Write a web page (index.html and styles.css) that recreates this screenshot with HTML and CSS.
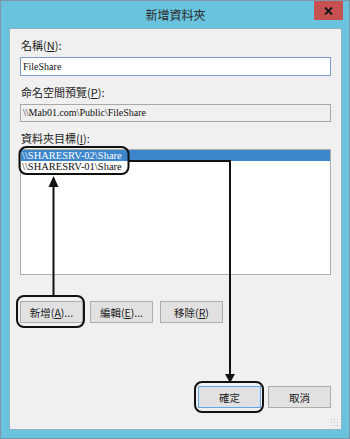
FILE: index.html
```html
<!DOCTYPE html>
<html lang="zh-Hant">
<head>
    <meta charset="UTF-8">
    <title>新增資料夾</title>
    <link rel="stylesheet" href="styles.css">
</head>
<body>
    <div class="window">
        <div class="titlebar">
            <span class="title">新增資料夾</span>
            <span class="close">
                <svg width="9" height="8" viewBox="0 0 9 8">
                    <path d="M1 0.5 L8 7.5 M8 0.5 L1 7.5" stroke="#1a1a1a" stroke-width="2"/>
                </svg>
            </span>
        </div>
        <div class="content">
            <label class="label">名稱(<u>N</u>):</label>
            <div class="textbox">FileShare</div>

            <label class="label">命名空間預覽(<u>P</u>):</label>
            <div class="textbox disabled">\\Mab01.com\Public\FileShare</div>

            <label class="label">資料夾目標(<u>I</u>):</label>
            <div class="listbox">
                <div class="item selected">\\SHARESRV-02\Share</div>
                <div class="item">\\SHARESRV-01\Share</div>
            </div>

            <div class="button-row">
                <button class="btn">新增(<u>A</u>)...</button>
                <button class="btn">編輯(<u>E</u>)...</button>
                <button class="btn">移除(<u>R</u>)</button>
            </div>

            <div class="dialog-buttons">
                <button class="btn default">確定</button>
                <button class="btn">取消</button>
            </div>
            <span class="grip"></span>
        </div>

        <!-- annotations drawn over the dialog -->
        <svg class="marks" width="350" height="439" viewBox="0 0 350 439">
            <rect x="19.5" y="147" width="109" height="27" rx="7" fill="none" stroke="#111" stroke-width="2"/>
            <path d="M128.5 161 H230 V376" fill="none" stroke="#111" stroke-width="2"/>
            <path d="M225 374 L235 374 L230 383 Z" fill="#111"/>
            <path d="M53.5 296 V184" fill="none" stroke="#111" stroke-width="2"/>
            <path d="M48.5 187 L58.5 187 L53.5 176 Z" fill="#111"/>
            <rect x="17" y="296" width="67" height="31" rx="7" fill="none" stroke="#111" stroke-width="2"/>
            <rect x="195" y="382" width="68" height="30" rx="7" fill="none" stroke="#111" stroke-width="2"/>
        </svg>
    </div>
</body>
</html>
```

FILE: styles.css
```css
* {
    margin: 0;
    padding: 0;
    box-sizing: border-box;
}

body {
    width: 350px;
    height: 439px;
    font-family: "Noto Sans CJK TC", "Liberation Sans", sans-serif;
    color: #1e1e1e;
    overflow: hidden;
}

.window {
    position: relative;
    width: 350px;
    height: 439px;
    background: #69c3de;
    border: 1px solid #7d97a6;
    padding: 0 7px 8px 8px;
    display: flex;
    flex-direction: column;
}

.titlebar {
    height: 27px;
    display: flex;
    align-items: flex-start;
    justify-content: center;
    position: relative;
}

.title {
    font-size: 12px;
    line-height: 27px;
    color: #2a2a2a;
}

.close {
    position: absolute;
    right: -1px;
    top: 0;
    width: 29px;
    height: 19px;
    background: #c75050;
    display: flex;
    align-items: center;
    justify-content: center;
}

.close svg {
    display: block;
}

.content {
    flex: 1;
    background: #f0f0f0;
    border: 1px solid #8fb3c2;
    padding: 0 10px 0 10px;
    display: flex;
    flex-direction: column;
    position: relative;
}

.label {
    font-size: 11px;
    line-height: 14px;
    margin: 9px 0 5px 1px;
    color: #1a1a1a;
}

.label u {
    text-decoration: underline;
}

.textbox {
    height: 19px;
    background: #fff;
    border: 1px solid #7a9cc6;
    font-family: "Liberation Serif", serif;
    font-size: 10px;
    line-height: 17px;
    padding-left: 2px;
    color: #111;
}

.textbox.disabled {
    background: #f0f0f0;
    border-color: #a8a8a8;
    height: 18px;
    line-height: 16px;
}

.listbox {
    height: 126px;
    background: #fff;
    border: 1px solid #adadad;
    margin-top: -1px;
}

.item {
    height: 11px;
    font-family: "Liberation Serif", serif;
    font-size: 10.5px;
    line-height: 11px;
    padding-left: 1px;
    color: #111;
}

.item.selected {
    background: #3d86cc;
    color: #fff;
}

.button-row {
    display: flex;
    gap: 7px;
    margin-top: 26px;
}

.btn {
    width: 63px;
    height: 22px;
    background: #e1e1e1;
    border: 1px solid #adadad;
    font-family: "Noto Sans CJK TC", "Liberation Sans", sans-serif;
    font-size: 10.5px;
    color: #1a1a1a;
}

.btn u {
    text-decoration: underline;
}

.dialog-buttons {
    display: flex;
    justify-content: flex-end;
    gap: 7px;
    margin-top: 63px;
}

.btn.default {
    border-color: #6ea5d8;
    box-shadow: inset 0 0 0 1px #cfe3f5;
}

.grip {
    position: absolute;
    right: 3px;
    bottom: 3px;
    width: 8px;
    height: 8px;
    background-image: radial-gradient(circle, #bdbdbd 0.8px, transparent 1px);
    background-size: 3px 3px;
}

.marks {
    position: absolute;
    left: -1px;
    top: -1px;
    pointer-events: none;
}
```
